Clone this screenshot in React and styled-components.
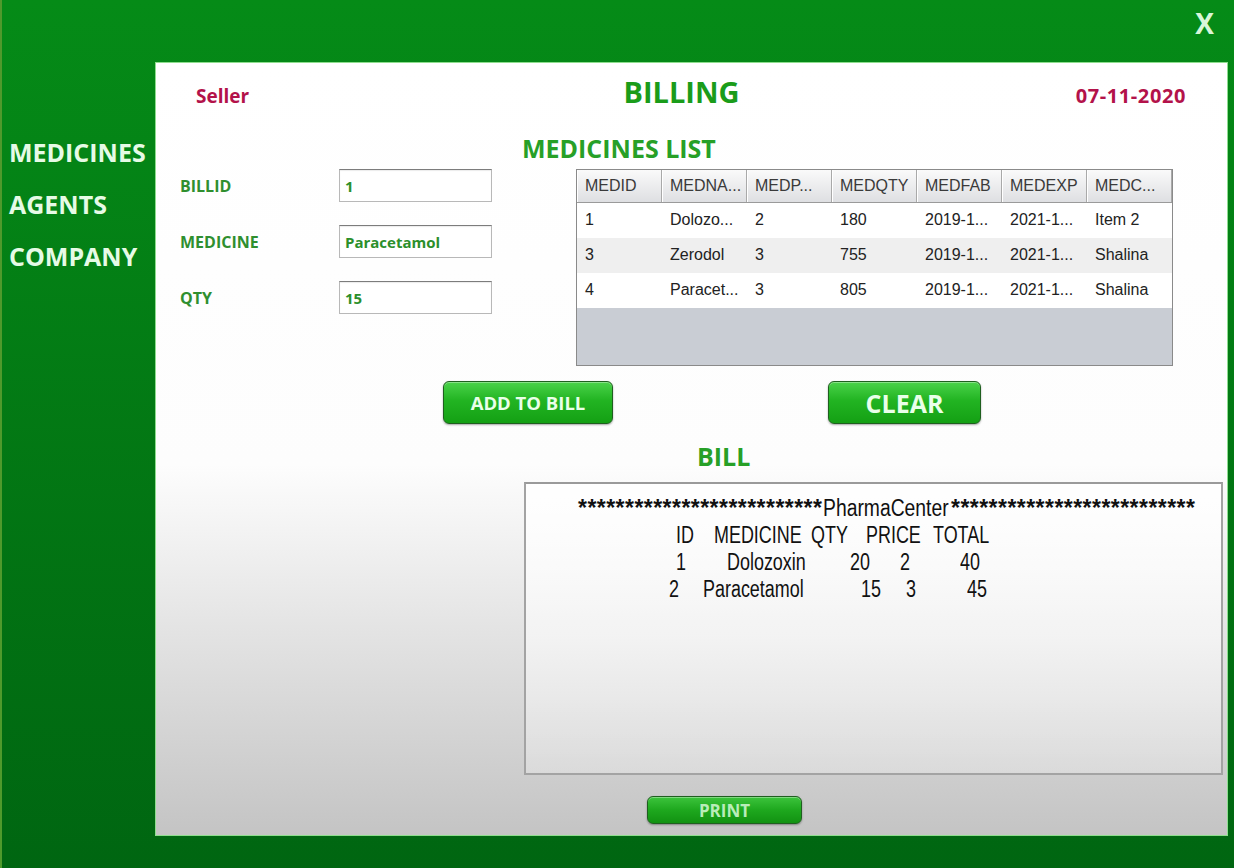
import React from 'react'
import styled, { createGlobalStyle } from 'styled-components'

const GlobalStyle = createGlobalStyle`
  html, body {
    margin: 0;
    padding: 0;
  }
  body {
    width: 1234px;
    height: 868px;
    overflow: hidden;
    font-family: "Open Sans", "DejaVu Sans", sans-serif;
  }
`

// window frame
const Window = styled.div`
  width: 1234px;
  height: 868px;
  box-sizing: border-box;
  display: flex;
  flex-direction: column;
  background: linear-gradient(#058b17, #006611);
  border-left: 2px solid #4f9a2c;
`

const TopBar = styled.div`
  height: 62px;
  display: flex;
  justify-content: flex-end;
  align-items: flex-start;
  padding-right: 20px;
`

const Close = styled.div`
  margin-top: 9px;
  font-size: 28px;
  font-weight: 700;
  line-height: 1;
  color: #d9f6d9;
`

const Body = styled.div`
  flex: 1;
  min-height: 0;
  display: flex;
  padding: 0 6px 32px 0;
`

const Sidebar = styled.nav`
  width: 153px;
  display: flex;
  flex-direction: column;
  padding: 64px 0 0 7px;
  box-sizing: border-box;
`

const NavItem = styled.div`
  height: 52px;
  line-height: 52px;
  font-size: 25px;
  font-weight: 700;
  color: #e6fbe6;
`

const Panel = styled.div`
  flex: 1;
  display: flex;
  flex-direction: column;
  border: 1px solid #8ede8e;
  background: linear-gradient(#ffffff 0%, #fdfdfd 52%, #c4c4c4 100%);
`

// header
const Header = styled.div`
  height: 70px;
  box-sizing: border-box;
  display: grid;
  grid-template-columns: 1fr auto 1fr;
  align-items: baseline;
  padding: 12px 41px 0 40px;
`

const Stamp = styled.div`
  font-size: ${p => p.$size}px;
  font-weight: 700;
  color: #b3124a;
  letter-spacing: ${p => p.$spacing || 0}px;
  text-align: ${p => p.$align || 'left'};
`

const Title = styled.div`
  font-size: 29px;
  line-height: 34px;
  font-weight: 700;
  color: #1a9c1a;
  margin-right: 19px;
`

// medicines list + form
const Middle = styled.div`
  display: grid;
  grid-template-columns: 312px 651px;
  grid-template-rows: 30px auto;
  column-gap: 30px;
  row-gap: 6px;
  margin-left: 24px;
`

const SectionTitle = styled.div`
  font-size: 25px;
  line-height: 30px;
  font-weight: 700;
  color: #27a027;
`

const Form = styled.div`
  grid-column: 1;
  grid-row: 2;
  display: grid;
  grid-template-columns: 159px 153px;
  grid-auto-rows: 33px;
  row-gap: 23px;
  align-items: center;
  align-content: start;
`

const Label = styled.label`
  font-size: 16px;
  font-weight: 700;
  color: #2f8f2f;
`

const Field = styled.div`
  height: 33px;
  box-sizing: border-box;
  display: flex;
  align-items: center;
  padding-left: 5px;
  border: 1px solid #b8b8b8;
  border-top-color: #7c7c7c;
  background: #fff;
  box-shadow: inset 0 1px 1px rgba(0, 0, 0, 0.08);
  font-size: 15px;
  font-weight: 700;
  color: #2b8f2b;
`

const TableWrap = styled.div`
  grid-column: 2;
  grid-row: 2;
  margin-left: 54px;
  width: 597px;
  height: 197px;
  box-sizing: border-box;
  border: 1px solid #8a8a8a;
  background: #c9cdd4;
  font-family: "Liberation Sans", Arial, sans-serif;
  font-size: 16px;
`

const Row = styled.div`
  display: grid;
  grid-template-columns: repeat(7, 85px);
  height: ${p => (p.$head ? 32 : 35)}px;
  background: ${p => (p.$head ? 'linear-gradient(#fafafa, #dedfe2)' : p.$alt ? '#efefef' : '#ffffff')};
  border-bottom: ${p => (p.$head ? '1px solid #9a9a9a' : 'none')};
`

const Cell = styled.div`
  display: flex;
  align-items: center;
  padding: ${p => (p.$head ? '0' : '0 0 2px')} 8px;
  white-space: nowrap;
  overflow: hidden;
  color: ${p => (p.$head ? '#3a3a3a' : '#222')};
  border-right: ${p => (p.$head ? '1px solid #a9a9a9' : 'none')};
  box-shadow: ${p => (p.$head ? 'inset 1px 0 0 #ffffff' : 'none')};
`

// buttons
const ButtonRow = styled.div`
  display: flex;
  gap: 215px;
  margin: 15px 0 0 287px;
`

const GreenButton = styled.button`
  width: ${p => p.$w}px;
  height: ${p => p.$h}px;
  padding: 0;
  border: 1px solid #1f5f1f;
  border-radius: 6px;
  background: linear-gradient(#4ad34a, #22b422 45%, #14a014);
  box-shadow: inset 0 1px 0 rgba(255, 255, 255, 0.35), 0 1px 2px rgba(0, 0, 0, 0.35);
  font-family: "Open Sans", "DejaVu Sans", sans-serif;
  font-size: ${p => p.$size}px;
  font-weight: 700;
  color: ${p => p.$color || '#e9ffe9'};
`

const BillTitle = styled(SectionTitle)`
  margin: 17px 0 0 541px;
`

// bill text area
const BillBox = styled.div`
  width: 699px;
  height: 293px;
  box-sizing: border-box;
  margin: 11px 0 0 368px;
  padding-top: 11px;
  border: 2px solid #a3a3a3;
  border-top-color: #9a9a9a;
  background: linear-gradient(rgba(255, 255, 255, 0.9), rgba(255, 255, 255, 0.25));
  font-family: "Liberation Sans", Arial, sans-serif;
  font-size: 23px;
  color: #111;
`

const BillLine = styled.div`
  display: flex;
  height: 27px;
  line-height: 27px;
  padding-left: ${p => p.$indent}px;
`

const Chunk = styled.span`
  display: inline-block;
  flex: none;
  width: ${p => p.$w || 0}px;
  white-space: pre;
  transform: scaleX(${p => p.$sx || 0.78});
  transform-origin: left center;
`

const Stars = styled.span`
  display: inline-block;
  flex: none;
  width: ${p => p.$w}px;
  white-space: pre;
  letter-spacing: 0.45px;
  font-weight: 700;
`

const PrintButton = styled(GreenButton)`
  margin: 21px 0 0 491px;
  background: linear-gradient(#3cc43c, #1ea81e 50%, #129212);
`

const columns = ['MEDID', 'MEDNA...', 'MEDP...', 'MEDQTY', 'MEDFAB', 'MEDEXP', 'MEDC...']

const medicines = [
  ['1', 'Dolozo...', '2', '180', '2019-1...', '2021-1...', 'Item 2'],
  ['3', 'Zerodol', '3', '755', '2019-1...', '2021-1...', 'Shalina'],
  ['4', 'Paracet...', '3', '805', '2019-1...', '2021-1...', 'Shalina'],
]

const billRows = [
  { indent: 150, cells: [['ID', 38], ['MEDICINE', 97], ['QTY', 55], ['PRICE', 67], ['TOTAL', 60]] },
  { indent: 150, cells: [['1', 51], ['Dolozoxin', 123], ['20', 50], ['2', 60], ['40', 30]] },
  { indent: 143, cells: [['2', 34], ['Paracetamol', 158], ['15', 45], ['3', 61], ['45', 30]] },
]

const stars = '*'.repeat(26)

export default function App() {
  return (
    <>
      <GlobalStyle />
      <Window>
        <TopBar>
          <Close>X</Close>
        </TopBar>
        <Body>
          <Sidebar>
            <NavItem>MEDICINES</NavItem>
            <NavItem>AGENTS</NavItem>
            <NavItem>COMPANY</NavItem>
          </Sidebar>

          <Panel>
            <Header>
              <Stamp $size={19}>Seller</Stamp>
              <Title>BILLING</Title>
              <Stamp $size={20} $spacing={0.6} $align="right">07-11-2020</Stamp>
            </Header>

            <Middle>
              <div />
              <SectionTitle>MEDICINES LIST</SectionTitle>
              <Form>
                <Label>BILLID</Label>
                <Field>1</Field>
                <Label>MEDICINE</Label>
                <Field>Paracetamol</Field>
                <Label>QTY</Label>
                <Field>15</Field>
              </Form>
              <TableWrap>
                <Row $head>
                  {columns.map(c => (
                    <Cell key={c} $head>{c}</Cell>
                  ))}
                </Row>
                {medicines.map((m, i) => (
                  <Row key={i} $alt={i === 1}>
                    {m.map((v, j) => (
                      <Cell key={j}>{v}</Cell>
                    ))}
                  </Row>
                ))}
              </TableWrap>
            </Middle>

            <ButtonRow>
              <GreenButton $w={170} $h={43} $size={18.5}>ADD TO BILL</GreenButton>
              <GreenButton $w={153} $h={43} $size={25}>CLEAR</GreenButton>
            </ButtonRow>

            <BillTitle>BILL</BillTitle>

            <BillBox>
              <BillLine $indent={52}>
                <Stars $w={245}>{stars}</Stars>
                <Chunk $w={128} $sx={0.84}>PharmaCenter</Chunk>
                <Stars $w={245}>{stars}</Stars>
              </BillLine>
              {billRows.map((r, i) => (
                <BillLine key={i} $indent={r.indent}>
                  {r.cells.map(([t, w]) => (
                    <Chunk key={t} $w={w}>{t}</Chunk>
                  ))}
                </BillLine>
              ))}
            </BillBox>

            <PrintButton $w={155} $h={28} $size={17} $color="#b9ecb9">PRINT</PrintButton>
          </Panel>
        </Body>
      </Window>
    </>
  )
}
